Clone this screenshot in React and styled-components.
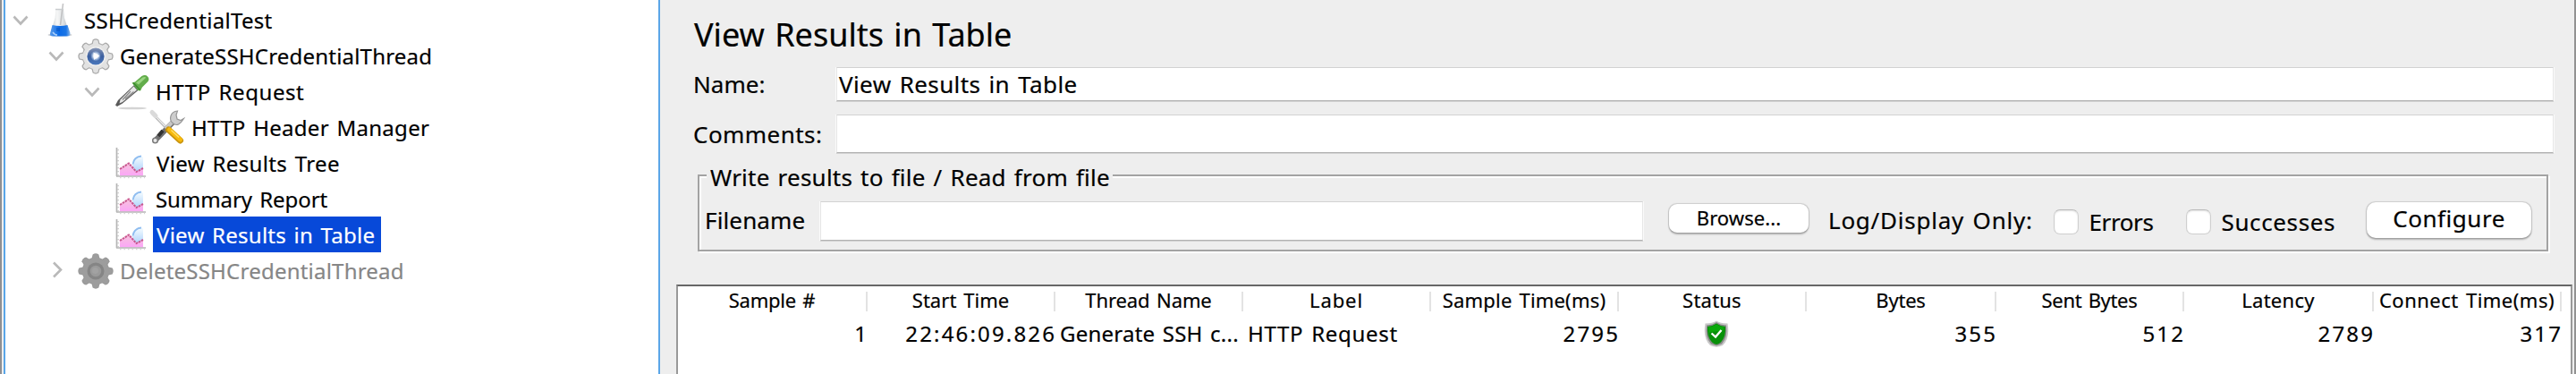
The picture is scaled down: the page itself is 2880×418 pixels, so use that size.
import React from 'react';
import styled, { createGlobalStyle, css } from 'styled-components';

const Global = createGlobalStyle`
  * { box-sizing: border-box; }
  body { margin: 0; background: #eee; }
`;

const type = css`
  font-family: "Noto Sans", "Open Sans", sans-serif;
  font-weight: 400;
  letter-spacing: ${p => p.$track || 0}px;
  word-spacing: 2px;
  white-space: pre;
  color: #000;
  -webkit-text-stroke: 0.2px currentColor;
`;

const Window = styled.div`
  display: flex;
  width: 2880px;
  height: 418px;
  overflow: hidden;
  background: #eee;
  border-left: 2px solid #8f8f92;
  border-right: 2px solid #929292;
`;

/* tree */
const TreePane = styled.div`
  width: 734px;
  flex: none;
  margin-left: 2px;
  background: #fff;
  border-left: 2px solid #5aa6e8;
  border-right: 2px solid #5aa6e8;
  padding-top: 2px;
`;
const TreeRow = styled.div`
  display: flex;
  height: 40px;
  padding-left: ${p => 6 + p.$depth * 40}px;
`;
const Toggle = styled.span`
  width: 36px;
  flex: none;
  display: flex;
  svg { display: block; }
`;
const IconSlot = styled.span`
  width: 38px;
  height: 40px;
  flex: none;
  svg { display: block; overflow: visible; }
`;
const TreeLabel = styled.span`
  ${type}
  font-size: 24px;
  line-height: 41px;
  height: 40px;
  margin-left: 5px;
  padding-left: ${p => p.$pad || 3}px;
  ${p => p.$disabled && 'color: #868686;'}
  ${p => p.$selected && 'color: #fff; background: #0749d9; width: 255px;'}
`;

/* editor pane */
const Editor = styled.div`
  flex: 1;
  min-width: 0;
`;
const Title = styled.div`
  ${type}
  font-size: 36px;
  line-height: 50px;
  height: 50px;
  margin: 14px 0 11px 38px;
`;
const Label = styled.span`
  ${type}
  font-size: 26px;
  flex: none;
  width: ${p => p.$w}px;
  line-height: ${p => p.$line || 38}px;
`;
const FieldRow = styled.div`
  display: flex;
  height: ${p => p.$h}px;
  margin: 0 23px ${p => p.$gap}px 37px;
`;
const Field = styled.div`
  ${type}
  flex: ${p => (p.$w ? 'none' : 1)};
  ${p => p.$w && `width: ${p.$w}px;`}
  height: ${p => p.$h}px;
  font-size: 26px;
  line-height: 36px;
  padding-left: 2px;
  background: #fff;
  border: 1px solid #e6e6e6;
  border-top-color: #d2d2d2;
  border-bottom-color: #b2b2b2;
  box-shadow: 0 1px 0 #d2d2d2, 1px 0 0 #fafafa, -1px 0 0 #fafafa;
`;
const GroupBox = styled.div`
  width: 2069px;
  height: 86px;
  margin-left: 42px;
  border: 2px solid #a3a3a3;
  box-shadow: 2px 2px 0 #fff, inset 2px 2px 0 #fff;
`;
const Legend = styled.div`
  ${type}
  font-size: 26px;
  line-height: 26px;
  height: 26px;
  width: 454px;
  margin: -12px 0 14px 8px;
  padding-left: 4px;
  background: #eee;
`;
const FileRow = styled.div`
  display: flex;
  align-items: flex-start;
  height: 44px;
  padding-left: 6px;
`;
const Button = styled.button`
  ${type}
  flex: none;
  border: 0;
  padding: 0;
  text-align: center;
  background: #fff;
  border-radius: ${p => (p.$small ? 9 : 10)}px;
  box-shadow: 0 0 1px 0.5px rgba(0,0,0,.13), 0 1.5px 2px rgba(0,0,0,.25);
  width: ${p => p.$w}px;
  height: ${p => (p.$small ? 32 : 40)}px;
  line-height: ${p => (p.$small ? 31 : 36)}px;
  font-size: ${p => (p.$small ? 22 : 26)}px;
  margin: ${p => (p.$small ? '3px 22px 0 29px' : '1px 0 0')};
  padding-bottom: ${p => (p.$small ? 1 : 4)}px;
`;
const CheckBox = styled.span`
  width: 28px;
  height: 28px;
  flex: none;
  margin: 9px 11.5px 0 0;
  background: #fff;
  border: 1px solid #cfcfcf;
  border-top-color: #bababa;
  border-radius: 7px;
  box-shadow: inset 0 1px 2px rgba(0,0,0,.12);
`;

/* results table */
const Table = styled.div`
  width: 2120px;
  height: 120px;
  margin: 37px 0 0 18px;
  background: #fff;
  border: solid #999;
  border-width: 2px 2px 0 2px;
  border-top-color: #666;
`;
const Line = styled.div`
  display: grid;
  grid-template-columns: 212px 210px 210px 210px 210px 210px 212px 210px 212px 210px;
  height: ${p => (p.$head ? 36 : 32)}px;
`;
const HeadCell = styled.div`
  ${type}
  display: flex;
  justify-content: center;
  font-size: 22px;
  line-height: 30px;
  > span { flex: 1; text-align: center; }
  &::after {
    content: '';
    width: 2px;
    height: 22px;
    margin-top: 6px;
    background: #e3e3e3;
  }
`;
const Cell = styled.div`
  ${type}
  font-size: 24px;
  line-height: 33px;
  display: flex;
  justify-content: ${p => (p.$left ? 'flex-start' : 'flex-end')};
  padding: 0 1px 0 5px;
  > span { margin-right: ${p => (p.$left ? 0 : -(p.$track || 0))}px; }
`;
const StatusCell = styled.div`
  display: flex;
  justify-content: center;
  padding: 2px 0 0 8px;
`;

const Chevron = ({ open }) => (
  <svg width="36" height="40" fill="none" stroke="#b9b9b9" strokeWidth="2.6">
    {open ? <path d="M3.5 16.5 11 24.5 18.500 16.500" /> : <path d="M9 12.500 17 20.500 9 28.500" transform="translate(-1 -1)" />}
  </svg>
);

const Flask = () => (
  <svg width="38" height="40" viewBox="0 0 38 40">
    <defs>
      <linearGradient id="glass" x1="0" x2="1"><stop offset="0" stopColor="#c4c8ca" /><stop offset=".35" stopColor="#f6f7f7" /><stop offset=".65" stopColor="#dfe2e4" /><stop offset="1" stopColor="#b9bdc1" /></linearGradient>
      <linearGradient id="liquid" x1="0" x2="1"><stop offset="0" stopColor="#5a9be8" /><stop offset=".45" stopColor="#0b6be8" /><stop offset=".8" stopColor="#1b76e6" /><stop offset="1" stopColor="#8fb9ea" /></linearGradient>
    </defs>
    <ellipse cx="19" cy="37" rx="13.500" ry="1.500" fill="#9aa0a8" opacity=".7" />
    <path d="M14.500 8h8.500l1 10 5.500 17q.5 3-3 3h-15q-3.500 0-3-3l5-17z" fill="url(#glass)" />
    <path d="M10.500 26q8.500 2 17 0l3 9q.3 3.500-3.500 3.500h-16q-3.500 0-3-3z" fill="url(#liquid)" />
    <path d="M22.500 2 19.500 26" stroke="#b9b9bb" strokeWidth="1.600" opacity=".8" />
    <path d="M14 8.500h9" stroke="#c9cccf" strokeWidth="1.500" />
    <path d="M15 29h4v4h-4z" fill="#064fb9" opacity=".5" />
    <path d="M11 34q2 3 5 3" stroke="#a9cffb" strokeWidth="1.500" fill="none" />
  </svg>
);

const teeth = [0, 45, 90, 135, 180, 225, 270, 315];
const Gear = ({ disabled }) => {
  const body = disabled ? '#9d9d9d' : '#e2e2e2';
  const edge = disabled ? '#9a9a9a' : '#a9a9a9';
  return (
    <svg width="38" height="40" viewBox="0 0 38 40">
      <defs>
        <linearGradient id="lens" x1="0" y1="0" x2="0" y2="1"><stop offset="0" stopColor="#8795b4" /><stop offset=".5" stopColor="#3b5f9f" /><stop offset="1" stopColor="#4a78bd" /></linearGradient>
        <radialGradient id="glow"><stop offset="0" stopColor="#fff" /><stop offset=".5" stopColor="#dbe6f4" /><stop offset="1" stopColor="#8fb0dc" stopOpacity=".3" /></radialGradient>
      </defs>
      {[edge, body].map((fill, i) => (
        <g key={fill} fill={fill}>
          {teeth.map(a => (
            <path key={a} d={i ? 'M15.500 8 16.600 3.200q2.400-1.200 4.800 0L22.500 8z' : 'M14.300 8 15.600 2.400q3.400-2.200 6.800 0L23.700 8z'} transform={`rotate(${a} 19 21)`} />
          ))}
          <circle cx="19" cy="21" r={i ? 14.300 : 15.200} />
        </g>
      ))}
      {disabled ? (
        <>
          <circle cx="19" cy="21" r="9.500" fill="#858585" />
          <circle cx="19" cy="21" r="6.200" fill="#9a9a9a" />
          <circle cx="18.500" cy="20.500" r="3.500" fill="#a2a2a2" />
        </>
      ) : (
        <>
          <circle cx="19" cy="21" r="11" fill="#efefef" />
          <circle cx="19" cy="21" r="9.600" fill="url(#lens)" />
          <circle cx="19" cy="20.500" r="5.500" fill="url(#glow)" />
          <path d="M16.500 16.500 23.500 20.500 17 25z" fill="#fff" opacity=".9" />
        </>
      )}
    </svg>
  );
};

const Pipette = () => (
  <svg width="38" height="40" viewBox="0 0 38 40">
    <ellipse cx="20" cy="39" rx="16" ry="1.300" fill="#c9c9c9" opacity=".8" />
    <path d="M22 13 27 18.500 9 33.500 3 37 1 35.500 4 30z" fill="#5a5a5a" />
    <path d="M21.500 14.500 25 18.500 9 32 5.500 33.500 6.500 29.500z" fill="#e6e6e6" />
    <path d="M18 20 9 29.500M21.500 20.500 12 28.500" stroke="#8a8a8a" strokeWidth="1.200" />
    <path d="M19.500 10.500 23 9.500 30.500 3q4-2 6.500.5t.5 5.500L31 15.500 29 19.500 26 19z" fill="#62ad4b" />
    <path d="M24 10.500 31.500 4.500q2.500-1 3.800.2L27 12.500z" fill="#9ad582" />
    <path d="M21 10.500 28.500 18.500" stroke="#3c8a30" strokeWidth="1.500" />
  </svg>
);

const Tools = () => (
  <svg width="38" height="40" viewBox="0 0 38 40">
    <path d="M3 5.500 19 22" stroke="#b5b5b5" strokeWidth="3.200" strokeLinecap="round" />
    <path d="M3 5 18 20.500" stroke="#ececec" strokeWidth="1.300" />
    <path d="M2 3.500 6 7.500" stroke="#dadada" strokeWidth="5" strokeLinecap="round" />
    <path d="M25.500 14.500 6 34.500" stroke="#707070" strokeWidth="6" strokeLinecap="round" />
    <path d="M27 12 17 22" stroke="#c8c8c8" strokeWidth="4.500" />
    <circle cx="5.500" cy="35" r="2.800" fill="#e9e9e9" stroke="#7b7b7b" strokeWidth="1.500" />
    <path d="M14 24 9 30" stroke="#333" strokeWidth="4" />
    <path d="M30.500 2q-6 .5-7.500 5.500t2 8 6.500 1.500 6-6.500l-3.500 2-4-1.500-1-4.500z" fill="#cdcdcd" stroke="#979797" strokeWidth="1.200" />
    <path d="M20.500 23 33.500 35" stroke="#c9940f" strokeWidth="7" strokeLinecap="round" />
    <path d="M21.500 23 33.500 34" stroke="#f7ba0c" strokeWidth="5" strokeLinecap="round" />
    <path d="M23.500 23.500 32 31.500" stroke="#ffe06c" strokeWidth="1.500" />
  </svg>
);

const Chart = () => (
  <svg width="38" height="40" viewBox="0 0 38 40">
    <defs>
      <linearGradient id="bubble" x1="0" x2="0" y1="0" y2="1"><stop offset="0" stopColor="#f4fbff" /><stop offset="1" stopColor="#a9d0fb" /></linearGradient>
      <linearGradient id="area" x1="0" x2="0" y1="0" y2="1"><stop offset="0" stopColor="#f7c3dc" /><stop offset="1" stopColor="#fba6f7" /></linearGradient>
    </defs>
    <path d="M32 13H29q-7 1-9 7.500 0 6 4 9l8 2z" fill="url(#bubble)" />
    <path d="M30 12.500q-8.500 1-9.500 9" fill="none" stroke="#8fbdf0" strokeWidth="1.800" />
    <path d="M6 27.500 16 20.500 24 30 32 26v8.500H6z" fill="url(#area)" />
    <path d="M6 27 16 20.500 24.500 30 32 26" fill="none" stroke="#c9568f" strokeWidth="2" strokeDasharray="2.600 .8" />
    <path d="M2.500 3V35M2 35H35" stroke="#b5b5b5" strokeWidth="1.700" />
    <path d="M4 5v29" stroke="#cfcfcf" strokeWidth="2" strokeDasharray="1.300 2.700" />
    <path d="M6 36.500h28" stroke="#d5d5d5" strokeWidth="1.500" strokeDasharray="1.500 3" />
  </svg>
);

const Shield = () => (
  <svg width="30" height="30" viewBox="0 0 30 30">
    <path d="M15 .5Q19 3.500 27.500 3.500 30.500 20 22 28q-7 3.500-14 0Q-.5 20 2.500 3.500 11 3.500 15 .5z" fill="#c9c9c9" />
    <path d="M15 2Q19 5 26 5.500 28 19 21 26.500l-6 2-6-2Q2 19 4 5.500 11 5 15 2z" fill="#8b8b8b" />
    <path d="M15 3.500Q19 6.500 25 7 26 18 20 24.500q-2.500 2-5 2.500-2.500-.5-5-2.500Q4 18 5 7q6-.5 10-3.500z" fill="#079009" />
    <path d="M15 4.500q3.500 2.500 8.500 3-.5 4-3 6Q14 11 6.500 14L6 7.500q5.500-.5 9-3z" fill="#0aa80b" />
    <path d="M9.500 14.500 14 18.500 20.500 11" fill="none" stroke="#fff" strokeWidth="2.300" />
  </svg>
);

const nodes = [
  { text: 'SSHCredentialTest', depth: 0, toggle: 'open', Icon: Flask, track: 0.31 },
  { text: 'GenerateSSHCredentialThread', depth: 1, toggle: 'open', Icon: Gear, track: 0.2 },
  { text: 'HTTP Request', depth: 2, toggle: 'open', Icon: Pipette, track: 0.57 },
  { text: 'HTTP Header Manager', depth: 3, Icon: Tools, track: 0.29 },
  { text: 'View Results Tree', depth: 2, Icon: Chart, track: 0.36, pad: 4 },
  { text: 'Summary Report', depth: 2, Icon: Chart, track: -0.07 },
  { text: 'View Results in Table', depth: 2, Icon: Chart, track: 0.26, pad: 4, selected: true },
  { text: 'DeleteSSHCredentialThread', depth: 1, toggle: 'closed', Icon: Gear, track: 0.22, disabled: true },
];

const columns = [
  ['Sample #', -0.25],
  ['Start Time', 0.05],
  ['Thread Name', -0.11],
  ['Label', 0.92],
  ['Sample Time(ms)', 0.19],
  ['Status', 0.22],
  ['Bytes', -0.22],
  ['Sent Bytes', -0.34],
  ['Latency', 0.27],
  ['Connect Time(ms)', 0.49],
];

export default function App() {
  return (
    <Window>
      <Global />
      <TreePane>
        {nodes.map(({ text, depth, toggle, Icon, track, pad, selected, disabled }) => (
          <TreeRow key={text} $depth={depth}>
            <Toggle>{toggle && <Chevron open={toggle === 'open'} />}</Toggle>
            <IconSlot><Icon disabled={disabled} /></IconSlot>
            <TreeLabel $track={track} $pad={pad} $selected={selected} $disabled={disabled}>{text}</TreeLabel>
          </TreeRow>
        ))}
      </TreePane>
      <Editor>
        <Title $track={0.01}>View Results in Table</Title>
        <FieldRow $h={39} $gap={14}>
          <Label $w={160} $track={0.04}>Name:</Label>
          <Field $h={38} $track={0.4}>View Results in Table</Field>
        </FieldRow>
        <FieldRow $h={44} $gap={23}>
          <Label $w={160} $line={44} $track={0.46}>Comments:</Label>
          <Field $h={43} />
        </FieldRow>
        <GroupBox>
          <Legend $track={0.23}>Write results to file / Read from file</Legend>
          <FileRow>
            <Label $w={129} $line={42} $track={0.14}>Filename</Label>
            <Field $w={920} $h={44} />
            <Button $small $w={156} $track={0.08}>Browse...</Button>
            <Label $w={252} $line={42} $track={0.76}>Log/Display Only:</Label>
            <CheckBox />
            <Label $w={108.5} $line={46} $track={-0.38}>Errors</Label>
            <CheckBox />
            <Label $w={162.5} $line={46} $track={0.62}>Successes</Label>
            <Button $w={184} $track={0.54}>Configure</Button>
          </FileRow>
        </GroupBox>
        <Table>
          <Line $head>
            {columns.map(([name, track]) => (
              <HeadCell key={name} $track={track}><span>{name}</span></HeadCell>
            ))}
          </Line>
          <Line>
            <Cell><span>1</span></Cell>
            <Cell $track={2.17}><span>22:46:09.826</span></Cell>
            <Cell $left $track={0.23}><span>Generate SSH c...</span></Cell>
            <Cell $left $track={0.7}><span>HTTP Request</span></Cell>
            <Cell $track={2.2}><span>2795</span></Cell>
            <StatusCell><Shield /></StatusCell>
            <Cell $track={2.2}><span>355</span></Cell>
            <Cell $track={2.2}><span>512</span></Cell>
            <Cell $track={2.2}><span>2789</span></Cell>
            <Cell $track={2.2}><span>317</span></Cell>
          </Line>
        </Table>
      </Editor>
    </Window>
  );
}
